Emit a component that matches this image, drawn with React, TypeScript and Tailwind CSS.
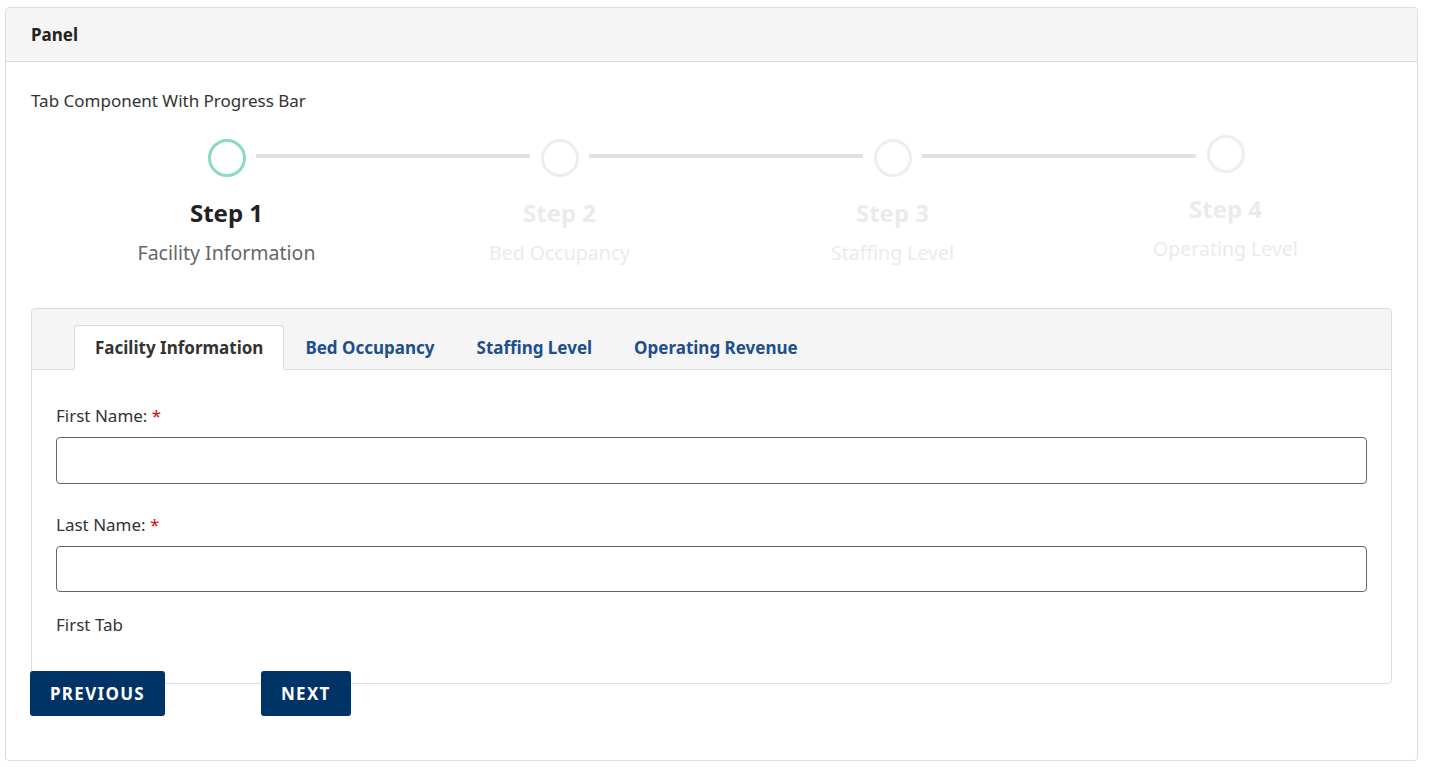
import { useState } from 'react';

const steps = [
  { title: 'Step 1', label: 'Facility Information' },
  { title: 'Step 2', label: 'Bed Occupancy' },
  { title: 'Step 3', label: 'Staffing Level' },
  { title: 'Step 4', label: 'Operating Level' },
];

const tabs = ['Facility Information', 'Bed Occupancy', 'Staffing Level', 'Operating Revenue'];

export default function App() {
  const [active, setActive] = useState(0);

  return (
    <div className="min-h-screen bg-white pt-[7px] pl-[5px] pr-[21px] pb-[6px] text-[#333]" style={{ fontFamily: '"Noto Sans", "Open Sans", sans-serif' }}>
      <div className="border border-[#dddddd] rounded-[4px] overflow-hidden">
        {/* panel header */}
        <div className="h-[54px] bg-[#f5f5f5] border-b border-[#dddddd] flex items-center pl-[25px]">
          <span className="text-[17px] font-bold text-[#222]">Panel</span>
        </div>

        <div className="pl-[25px] pr-[25px] pt-[27px] pb-[44px]">
          <div className="text-[17px] leading-[24px] text-[#333]">Tab Component With Progress Bar</div>

          {/* progress steps */}
          <div className="flex ml-[29px] mt-[26px]">
            {steps.map((s, i) => {
              const done = i === 0;
              const last = i === steps.length - 1;
              return (
                <div key={s.title} className={`flex-1 flex flex-col items-center ${last ? '-mt-[4px]' : ''}`}>
                  <div className="relative w-full flex justify-center">
                    <div className={`w-[38px] h-[38px] rounded-full border-[3px] ${done ? 'border-[#8ad9c2]' : 'border-[#eeeeee]'}`} />
                    {!last && (
                      <div className="absolute top-[15px] left-[calc(50%+29px)] w-[274px] h-[4px] bg-[#e2e2e2]" />
                    )}
                  </div>
                  <div className={`mt-[20px] text-[24px] leading-[32px] font-bold ${done ? 'text-[#222]' : 'text-[#ebebeb]'}`}>{s.title}</div>
                  <div className={`mt-[10px] text-[19.5px] leading-[27px] ${done ? 'text-[#666]' : 'text-[#ebebeb]'}`}>{s.label}</div>
                </div>
              );
            })}
          </div>

          {/* tabbed card */}
          <div className="mt-[42px] border border-[#dddddd] rounded-[4px]">
            <div className="h-[61px] bg-[#f5f5f5] border-b border-[#dddddd] rounded-t-[4px] flex items-end pl-[42px]">
              {tabs.map((t, i) => (
                <button
                  key={t}
                  onClick={() => setActive(i)}
                  className={`h-[45px] px-[20px] text-[17px] font-bold -mb-px rounded-t-[4px] border ${
                    active === i
                      ? 'bg-white border-[#dddddd] border-b-white text-[#333]'
                      : 'border-transparent text-[#1d4f8c]'
                  }`}
                >
                  {t}
                </button>
              ))}
            </div>

            <div className="px-[24px] pt-[34px] pb-[46px]">
              <label className="block text-[17px] leading-[24px] text-[#333]">
                First Name: <span className="text-[#e60000]">*</span>
              </label>
              <input className="mt-[9px] block w-full h-[47px] border border-[#666] rounded-[4px] px-3 outline-none" />

              <label className="block mt-[29px] text-[17px] leading-[24px] text-[#333]">
                Last Name: <span className="text-[#e60000]">*</span>
              </label>
              <input className="mt-[9px] block w-full h-[46px] border border-[#666] rounded-[4px] px-3 outline-none" />

              <div className="mt-[21px] text-[17px] leading-[24px] text-[#333]">
                {active === 0 ? 'First Tab' : active === 1 ? 'Second Tab' : active === 2 ? 'Third Tab' : 'Fourth Tab'}
              </div>
            </div>
          </div>

          {/* nav buttons */}
          <div className="flex -mt-[13px] -ml-px gap-[96px] relative">
            <button
              onClick={() => setActive(Math.max(0, active - 1))}
              className="h-[45px] px-[20px] bg-[#003366] text-white rounded-[3px] text-[17px] font-bold tracking-[1.3px]"
            >
              PREVIOUS
            </button>
            <button
              onClick={() => setActive(Math.min(3, active + 1))}
              className="h-[45px] px-[20px] bg-[#003366] text-white rounded-[3px] text-[17px] font-bold tracking-[1.3px]"
            >
              NEXT
            </button>
          </div>
        </div>
      </div>
    </div>
  );
}
